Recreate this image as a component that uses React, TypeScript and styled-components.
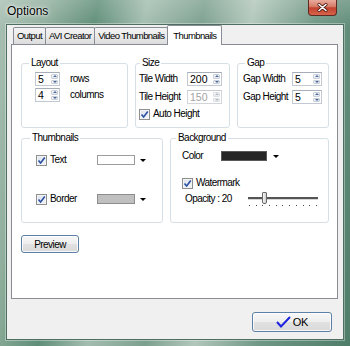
import styled, { createGlobalStyle } from "styled-components";

const UI_FONT = `"Liberation Sans", Arial, sans-serif`;

const GlobalStyle = createGlobalStyle`
  html, body {
    margin: 0;
    padding: 0;
  }
  body {
    width: 350px;
    height: 346px;
    overflow: hidden;
    background: #4f7f6c;
  }
`;

const Window = styled.div`
  width: 350px;
  height: 346px;
  box-sizing: border-box;
  display: flex;
  flex-direction: column;
  padding: 0 6px 6px 6px;
  background:
    linear-gradient(180deg, rgba(255, 255, 255, 0.18) 0%, rgba(255, 255, 255, 0) 8%),
    linear-gradient(
      100deg,
      #a9c0b3 0%,
      #8fae9c 12%,
      #5f8e78 24%,
      #a3bdb0 36%,
      #7ca08e 50%,
      #b2c7bc 62%,
      #6f9785 78%,
      #4e7d6a 100%
    );
  font-family: ${UI_FONT};
  font-size: 10px;
  letter-spacing: -0.55px;
  color: #000;
`;

const TitleBar = styled.div`
  height: 24px;
  display: flex;
  align-items: flex-start;
`;

const Title = styled.span`
  font-size: 12px;
  letter-spacing: 0;
  margin: 4px 0 0 1px;
  text-shadow: 0 0 5px rgba(255, 255, 255, 0.95), 0 0 2px rgba(255, 255, 255, 0.9);
`;

const CloseButton = styled.div`
  margin-left: auto;
  margin-right: 7px;
  width: 29px;
  height: 16px;
  box-sizing: border-box;
  border: 1px solid #5e2a22;
  border-top: none;
  border-radius: 0 0 4px 4px;
  background: linear-gradient(180deg, #e9ab9c 0%, #d47a66 45%, #c2412e 52%, #d8634a 100%);
  display: flex;
  align-items: center;
  justify-content: center;
`;

const Client = styled.div`
  flex: 1;
  background: #f0f0f0;
  border: 1px solid #4d6e60;
  box-shadow: 0 0 0 1px rgba(255, 255, 255, 0.35);
  padding: 0 5px 0 4px;
  display: flex;
  flex-direction: column;
`;

const TabRow = styled.div`
  display: flex;
  align-items: flex-end;
  height: 20px;
  margin-left: 2px;
  position: relative;
  z-index: 2;
`;

const Tab = styled.div<{ $active?: boolean }>`
  box-sizing: border-box;
  height: ${(p) => (p.$active ? "20px" : "17px")};
  margin-bottom: ${(p) => (p.$active ? "0" : "1px")};
  margin-right: -1px;
  padding: ${(p) => (p.$active ? "2px 5px 0" : "0 3px")};
  border: 1px solid #898c95;
  border-bottom: none;
  border-radius: 2px 2px 0 0;
  background: ${(p) =>
    p.$active ? "#fff" : "linear-gradient(180deg, #f3f3f3 0%, #ebebeb 50%, #dcdcdc 100%)"};
  font-size: 9.5px;
  letter-spacing: -0.6px;
  line-height: 15px;
  white-space: nowrap;
`;

const Panel = styled.div`
  position: relative;
  z-index: 1;
  margin-top: -1px;
  height: 255px;
  box-sizing: border-box;
  border: 1px solid #898c95;
  background: #fff;
  padding: 12px 8px 0 9px;
  display: flex;
  flex-direction: column;
`;

const TopRow = styled.div`
  display: grid;
  grid-template-columns: 107px 95px 1fr;
  column-gap: 7px;
  height: 71px;
`;

const BottomRow = styled.div`
  display: grid;
  grid-template-columns: 142px 1fr;
  column-gap: 7px;
  height: 91px;
  margin-top: 4px;
`;

const Group = styled.section`
  margin-top: 6px;
  box-sizing: border-box;
  border: 1px solid #d5dfe5;
  border-radius: 3px;
  display: flex;
  flex-direction: column;
`;

const GroupTitle = styled.span<{ $indent?: number }>`
  align-self: flex-start;
  margin: -7px 0 0 ${(p) => p.$indent ?? 7}px;
  padding: 0 2px;
  line-height: 12px;
  background: #fff;
`;

const Body = styled.div<{ $pad: string }>`
  padding: ${(p) => p.$pad};
`;

const Stack = styled.div<{ $gap: number; $top?: number }>`
  display: flex;
  flex-direction: column;
  gap: ${(p) => p.$gap}px;
  margin-top: ${(p) => p.$top ?? 0}px;
`;

const FieldRow = styled.div<{ $label: number; $indent?: number }>`
  display: grid;
  grid-template-columns: ${(p) => p.$label}px auto;
  align-items: center;
  justify-content: start;
  padding-left: ${(p) => p.$indent ?? 0}px;
`;

const InlineRow = styled.div<{ $gap: number }>`
  display: flex;
  align-items: center;
  gap: ${(p) => p.$gap}px;
`;

const Label = styled.span`
  line-height: 12px;
  white-space: nowrap;
`;

const SpinBox = styled.div<{ $w: number; $disabled?: boolean }>`
  width: ${(p) => p.$w}px;
  height: 14px;
  box-sizing: border-box;
  display: flex;
  border: 1px solid ${(p) => (p.$disabled ? "#d2d5da" : "#c3c9d2")};
  border-top-color: ${(p) => (p.$disabled ? "#c6c9ce" : "#a5adb9")};
  background: #fff;
`;

const SpinValue = styled.span<{ $disabled?: boolean }>`
  flex: 1;
  padding-left: 2px;
  font-size: 10.5px;
  letter-spacing: 0;
  line-height: 12px;
  color: ${(p) => (p.$disabled ? "#a3a3a3" : "#000")};
`;

const SpinButtons = styled.div`
  width: 7px;
  margin: 1px 1px 1px 0;
  display: flex;
  flex-direction: column;
  gap: 1px;
`;

const SpinArrow = styled.div<{ $up?: boolean; $disabled?: boolean }>`
  flex: 1;
  box-sizing: border-box;
  border: 1px solid ${(p) => (p.$disabled ? "#dcdfe3" : "#c9cfd8")};
  border-radius: 1px;
  background: linear-gradient(180deg, #fbfbfc, #e6e9ee);
  display: flex;
  align-items: center;
  justify-content: center;
  &::after {
    content: "";
    border-left: 2px solid transparent;
    border-right: 2px solid transparent;
    ${(p) => (p.$up ? "border-bottom" : "border-top")}: 2px solid
      ${(p) => (p.$disabled ? "#b8bcc4" : "#4a6a9c")};
  }
`;

const CheckBox = styled.span`
  width: 11px;
  height: 11px;
  box-sizing: border-box;
  border: 1px solid #8e8f8f;
  background: linear-gradient(135deg, #dce3ee 0%, #f3f5f9 100%);
  box-shadow: inset 0 0 0 1px #f4f4f4;
  display: flex;
  align-items: center;
  justify-content: center;
  flex: none;
`;

const Check = styled.label`
  display: flex;
  align-items: center;
  gap: 3px;
  line-height: 12px;
  white-space: nowrap;
`;

const Swatch = styled.span<{ $color: string; $w: number; $border: string }>`
  width: ${(p) => p.$w}px;
  height: 10px;
  box-sizing: border-box;
  background: ${(p) => p.$color};
  border: 1px solid ${(p) => p.$border};
`;

const DropArrow = styled.span`
  width: 0;
  height: 0;
  border-left: 3px solid transparent;
  border-right: 3px solid transparent;
  border-top: 3px solid #000;
`;

const PickerRow = styled.div<{ $label: number; $arrowGap: number }>`
  display: grid;
  grid-template-columns: ${(p) => p.$label}px auto auto;
  column-gap: ${(p) => p.$arrowGap}px;
  align-items: center;
  justify-content: start;
  height: 12px;
  & > :first-child {
    margin-right: -${(p) => p.$arrowGap}px;
  }
`;

const Slider = styled.div`
  width: 70px;
  height: 16px;
  display: flex;
  flex-direction: column;
`;

const Track = styled.div`
  height: 14px;
  display: flex;
  align-items: center;
`;

const TrackLine = styled.div`
  flex: 1;
  height: 2px;
  background: #555;
  border-bottom: 1px solid #d6d6d6;
  display: flex;
  align-items: center;
`;

const Thumb = styled.div`
  margin-left: 14px;
  width: 5px;
  height: 12px;
  box-sizing: border-box;
  border: 1px solid #6a6a6a;
  border-radius: 1px 1px 2px 2px;
  background: linear-gradient(90deg, #f5f5f5, #cfcfcf);
`;

const Ticks = styled.div`
  display: flex;
  justify-content: space-between;
  padding: 0 1px;
  height: 2px;
  & > span {
    width: 1px;
    height: 1px;
    background: #444;
  }
`;

const PushButton = styled.div<{ $w: number; $h: number }>`
  width: ${(p) => p.$w}px;
  height: ${(p) => p.$h}px;
  box-sizing: border-box;
  border: 1px solid #5f80a6;
  border-radius: 3px;
  background: linear-gradient(180deg, #f8f8f8 0%, #eeeeee 48%, #e1e1e1 52%, #dadada 100%);
  box-shadow: inset 0 0 0 1px rgba(255, 255, 255, 0.8);
  display: flex;
  align-items: center;
  justify-content: center;
  gap: 2px;
`;

const PreviewWrap = styled.div`
  margin-top: 12px;
`;

const Footer = styled.div`
  display: flex;
  justify-content: flex-end;
  padding: 13px 6px 0 0;
`;

const OkText = styled.span`
  font-size: 11px;
  letter-spacing: -0.3px;
`;

function Spin({ value, w, disabled }: { value: string; w: number; disabled?: boolean }) {
  return (
    <SpinBox $w={w} $disabled={disabled}>
      <SpinValue $disabled={disabled}>{value}</SpinValue>
      <SpinButtons>
        <SpinArrow $up $disabled={disabled} />
        <SpinArrow $disabled={disabled} />
      </SpinButtons>
    </SpinBox>
  );
}

function Tick() {
  return (
    <CheckBox>
      <svg width="9" height="9" viewBox="0 0 9 9">
        <path d="M1.5 4.5 L3.6 7 L7.8 1.5" fill="none" stroke="#2b4fa3" strokeWidth="1.6" />
      </svg>
    </CheckBox>
  );
}

export default function App() {
  return (
    <>
      <GlobalStyle />
      <Window>
        <TitleBar>
          <Title>Options</Title>
          <CloseButton>
            <svg width="11" height="9" viewBox="0 0 11 9">
              <path d="M2 1.5 L9 7.5 M9 1.5 L2 7.5" stroke="#4a1a12" strokeWidth="3" strokeLinecap="round" />
              <path d="M2 1.5 L9 7.5 M9 1.5 L2 7.5" stroke="#fff" strokeWidth="1.6" strokeLinecap="round" />
            </svg>
          </CloseButton>
        </TitleBar>
        <Client>
          <TabRow>
            <Tab>Output</Tab>
            <Tab>AVI Creator</Tab>
            <Tab>Video Thumbnails</Tab>
            <Tab $active>Thumbnails</Tab>
          </TabRow>
          <Panel>
            <TopRow>
              <Group>
                <GroupTitle>Layout</GroupTitle>
                <Body $pad="3px 0 0 13px">
                  <Stack $gap={2}>
                    <InlineRow $gap={10}>
                      <Spin value="5" w={25} />
                      <Label>rows</Label>
                    </InlineRow>
                    <InlineRow $gap={10}>
                      <Spin value="4" w={25} />
                      <Label>columns</Label>
                    </InlineRow>
                  </Stack>
                </Body>
              </Group>
              <Group>
                <GroupTitle $indent={4}>Size</GroupTitle>
                <Body $pad="3px 0 0 3px">
                  <Stack $gap={4}>
                    <FieldRow $label={48}>
                      <Label>Tile Width</Label>
                      <Spin value="200" w={35} />
                    </FieldRow>
                    <FieldRow $label={48}>
                      <Label>Tile Height</Label>
                      <Spin value="150" w={35} disabled />
                    </FieldRow>
                    <Check>
                      <Tick />
                      Auto Height
                    </Check>
                  </Stack>
                </Body>
              </Group>
              <Group>
                <GroupTitle>Gap</GroupTitle>
                <Body $pad="3px 0 0 5px">
                  <Stack $gap={4}>
                    <FieldRow $label={49}>
                      <Label>Gap Width</Label>
                      <Spin value="5" w={30} />
                    </FieldRow>
                    <FieldRow $label={49}>
                      <Label>Gap Height</Label>
                      <Spin value="5" w={30} />
                    </FieldRow>
                  </Stack>
                </Body>
              </Group>
            </TopRow>
            <BottomRow>
              <Group>
                <GroupTitle $indent={8}>Thumbnails</GroupTitle>
                <Body $pad="10px 0 0 14px">
                  <Stack $gap={27}>
                    <PickerRow $label={56} $arrowGap={5}>
                      <Check>
                        <Tick />
                        Text
                      </Check>
                      <Swatch $color="#ffffff" $w={38} $border="#9c9c9c" />
                      <DropArrow />
                    </PickerRow>
                    <PickerRow $label={56} $arrowGap={5}>
                      <Check>
                        <Tick />
                        Border
                      </Check>
                      <Swatch $color="#c0c0c0" $w={38} $border="#8c8c8c" />
                      <DropArrow />
                    </PickerRow>
                  </Stack>
                </Body>
              </Group>
              <Group>
                <GroupTitle $indent={5}>Background</GroupTitle>
                <Body $pad="6px 0 0 11px">
                  <PickerRow $label={33} $arrowGap={6}>
                    <Label>Color</Label>
                    <Swatch $color="#262626" $w={46} $border="#5a5a5a" />
                    <DropArrow />
                  </PickerRow>
                  <Stack $gap={2} $top={15}>
                    <Check>
                      <Tick />
                      Watermark
                    </Check>
                    <FieldRow $label={63} $indent={3}>
                      <Label>Opacity : 20</Label>
                      <Slider>
                        <Track>
                          <TrackLine>
                            <Thumb />
                          </TrackLine>
                        </Track>
                        <Ticks>
                          {Array.from({ length: 11 }).map((_, i) => (
                            <span key={i} />
                          ))}
                        </Ticks>
                      </Slider>
                    </FieldRow>
                  </Stack>
                </Body>
              </Group>
            </BottomRow>
            <PreviewWrap>
              <PushButton $w={58} $h={18}>Preview</PushButton>
            </PreviewWrap>
          </Panel>
          <Footer>
            <PushButton $w={80} $h={20}>
              <svg width="15" height="12" viewBox="0 0 15 12">
                <path d="M1 6 L5 10.5 L14 1" fill="none" stroke="#1f23e0" strokeWidth="2" />
              </svg>
              <OkText>OK</OkText>
            </PushButton>
          </Footer>
        </Client>
      </Window>
    </>
  );
}
